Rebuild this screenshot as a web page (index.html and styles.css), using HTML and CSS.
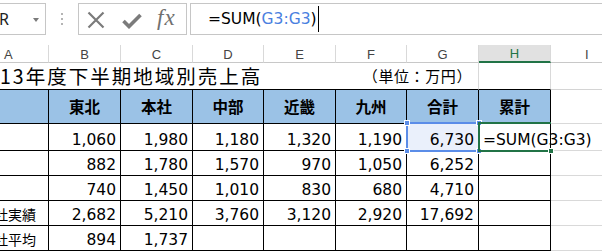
FILE: index.html
```html
<!DOCTYPE html>
<html lang="ja">
<head>
<meta charset="utf-8">
<link rel="stylesheet" href="styles.css">
</head>
<body>
<div class="fbar">
  <div class="namebox"><span class="name">R</span><span class="caret"></span></div>
  <div class="grip"><i></i><i></i><i></i></div>
  <div class="btns">
    <svg class="ico-x" width="18" height="18" viewBox="0 0 18 18"><path d="M1.5 1.5L16.5 16.5M16.5 1.5L1.5 16.5" stroke="#7b7b7b" stroke-width="2.2" fill="none"/></svg>
    <svg class="ico-ok" width="20" height="16" viewBox="0 0 20 16"><path d="M1.5 8L7 13.5L18.5 2" stroke="#7b7b7b" stroke-width="3.6" fill="none"/></svg>
    <span class="fx">fx</span>
  </div>
  <div class="formula"><span>=SUM(</span><span class="ref">G3:G3</span><span>)</span><span class="cursor"></span></div>
</div>
<div class="sheet">
  <div class="ch ch-a">A</div><div class="ch">B</div><div class="ch">C</div><div class="ch">D</div><div class="ch">E</div><div class="ch">F</div><div class="ch">G</div><div class="ch on">H</div><div class="ch last">I</div>

  <div class="c1 title"><span>13年度下半期地域別売上高</span></div>
  <div class="c1 unit">（単位：万円）</div>
  <div class="c1 h1"></div>
  <div class="gi top"></div>

  <div class="t hd"></div><div class="t hd">東北</div><div class="t hd">本社</div><div class="t hd">中部</div><div class="t hd">近畿</div><div class="t hd">九州</div><div class="t hd">合計</div><div class="t hd">累計</div><div class="gi"></div>

  <div class="t lb"></div><div class="t n">1,060</div><div class="t n">1,980</div><div class="t n">1,180</div><div class="t n">1,320</div><div class="t n">1,190</div><div class="t n sel"><span class="selbox"><i class="hd1"></i><i class="hd2"></i><i class="hd3"></i><i class="hd4"></i></span>6,730</div><div class="t f act"><span class="actbox"><i></i></span>=SUM(G3:G3)</div><div class="gi"></div>

  <div class="t lb"></div><div class="t n">882</div><div class="t n">1,780</div><div class="t n">1,570</div><div class="t n">970</div><div class="t n">1,050</div><div class="t n">6,252</div><div class="t n"></div><div class="gi"></div>

  <div class="t lb"></div><div class="t n">740</div><div class="t n">1,450</div><div class="t n">1,010</div><div class="t n">830</div><div class="t n">680</div><div class="t n">4,710</div><div class="t n"></div><div class="gi"></div>

  <div class="t lb"><span>支社実績</span></div><div class="t n">2,682</div><div class="t n">5,210</div><div class="t n">3,760</div><div class="t n">3,120</div><div class="t n">2,920</div><div class="t n">17,692</div><div class="t n"></div><div class="gi"></div>

  <div class="t lb"><span>支社平均</span></div><div class="t n">894</div><div class="t n">1,737</div><div class="t n"></div><div class="t n"></div><div class="t n"></div><div class="t n"></div><div class="t n"></div><div class="gi"></div>
</div>
</body>
</html>
```
FILE: styles.css
```css
* { box-sizing: border-box; margin: 0; padding: 0; }
html, body { width: 602px; height: 252px; overflow: hidden; background: #fff; }
body { font-family: "DejaVu Sans", sans-serif; color: #000; }

/* formula bar */
.fbar { height: 45px; display: flex; align-items: flex-start; padding-top: 3px; overflow: hidden; }
.namebox { width: 46px; height: 32px; border: 1px solid #c6c6c6; border-left: none; display: flex; align-items: center; justify-content: space-between; padding: 0 6px 0 0; flex: none; }
.name { font-family: "Noto Sans", sans-serif; font-size: 16px; color: #222; margin-left: -1px; }
.caret { width: 0; height: 0; border-left: 3.5px solid transparent; border-right: 3.5px solid transparent; border-top: 4px solid #7a7a7a; margin-top: 2px; }
.grip { width: 32px; height: 32px; display: flex; flex-direction: column; align-items: center; justify-content: center; gap: 3px; flex: none; }
.grip i { width: 2px; height: 2px; background: #b4b4b4; display: block; }
.btns { width: 109px; height: 32px; border: 1px solid #c6c6c6; display: flex; align-items: center; flex: none; position: relative; }
.ico-x { margin-left: 8px; margin-top: 1px; }
.ico-ok { margin-left: 17px; margin-top: 3px; }
.fx { font-family: "Liberation Serif", serif; font-style: italic; font-size: 23px; color: #707070; margin-left: 15px; margin-top: -2px; letter-spacing: 1px; }
.formula { margin-left: 3px; width: 440px; height: 32px; border: 1px solid #c6c6c6; border-right: none; flex: none; display: flex; align-items: center; padding-left: 17px; font-size: 15.5px; line-height: 18px; padding-bottom: 1px; }
.ref { color: #4a7fe0; }
.cursor { width: 1px; height: 26px; background: #000; margin-left: 1px; }

/* sheet grid */
.sheet { display: grid; grid-template-columns: 49px 72px 72px 71px 72px 71px 72px 72px 1fr; grid-template-rows: 18px 27px 34px 27px 25px 25px 25px 25px; }
.ch { border-right: 1px solid #d9d9d9; border-bottom: 1px solid #c8c8c8; font-family: "Liberation Sans", sans-serif; font-size: 13px; color: #444; display: flex; align-items: center; justify-content: center; padding-top: 1px; }
.ch-a { justify-content: flex-start; padding-left: 4px; }
.ch.on { background: #e1e1e1; color: #217346; border-bottom: 2px solid #217346; }
.ch.last { border-right: none; justify-content: flex-start; padding-left: 34px; }

.c1 { border-bottom: 1px solid #000; display: flex; align-items: flex-end; font-family: "Noto Sans CJK JP", sans-serif; }
.title { grid-column: 1 / 6; font-size: 19.5px; letter-spacing: 2px; line-height: 26px; white-space: nowrap; }
.unit { grid-column: 6 / 8; border-right: 1px solid #d9d9d9; justify-content: flex-end; font-size: 15px; line-height: 20px; padding-right: 6px; padding-bottom: 3px; letter-spacing: 0.6px; }
.h1 { border-right: 1px solid #d9d9d9; }
.gi { border-bottom: 1px solid #d9d9d9; }
.gi.top { border-bottom: 1px solid #d4d4d4; }

.t { border-right: 1px solid #000; border-bottom: 1px solid #000; display: flex; }
.hd { background: #9bc2e6; align-items: center; justify-content: center; font-family: "Noto Sans CJK JP", sans-serif; font-weight: 700; font-size: 15.5px; padding-bottom: 1px; }
.n { justify-content: flex-end; align-items: flex-end; font-size: 15.5px; line-height: 18px; padding: 0 4px 1px 0; white-space: nowrap; }
.lb { align-items: flex-end; justify-content: flex-end; font-family: "Noto Sans CJK JP", sans-serif; font-size: 14px; line-height: 20px; padding: 0 12px 1px 0; white-space: nowrap; overflow: hidden; }
.f { align-items: flex-end; font-size: 15.5px; line-height: 18px; padding: 0 0 1px 4px; white-space: nowrap; overflow: visible; }

.sel { position: relative; background: #eaf0fb; }
.selbox { position: absolute; left: -1px; top: -2px; width: 74px; height: 30px; border: 2px solid #5b8de8; }
.selbox i { position: absolute; width: 6px; height: 6px; background: #5b8de8; border: 1px solid #fff; }
.selbox .hd1 { left: -4px; top: -4px; }
.selbox .hd2 { right: -4px; top: -4px; }
.selbox .hd3 { left: -4px; bottom: -4px; }
.selbox .hd4 { right: -4px; bottom: -4px; }
.act { position: relative; }
.actbox { position: absolute; left: -1px; top: -2px; width: 73px; height: 30px; border: 2px solid #217346; border-right: none; }
.actbox i { position: absolute; right: -3px; bottom: -4px; width: 6px; height: 6px; background: #217346; border: 1px solid #fff; }
```
